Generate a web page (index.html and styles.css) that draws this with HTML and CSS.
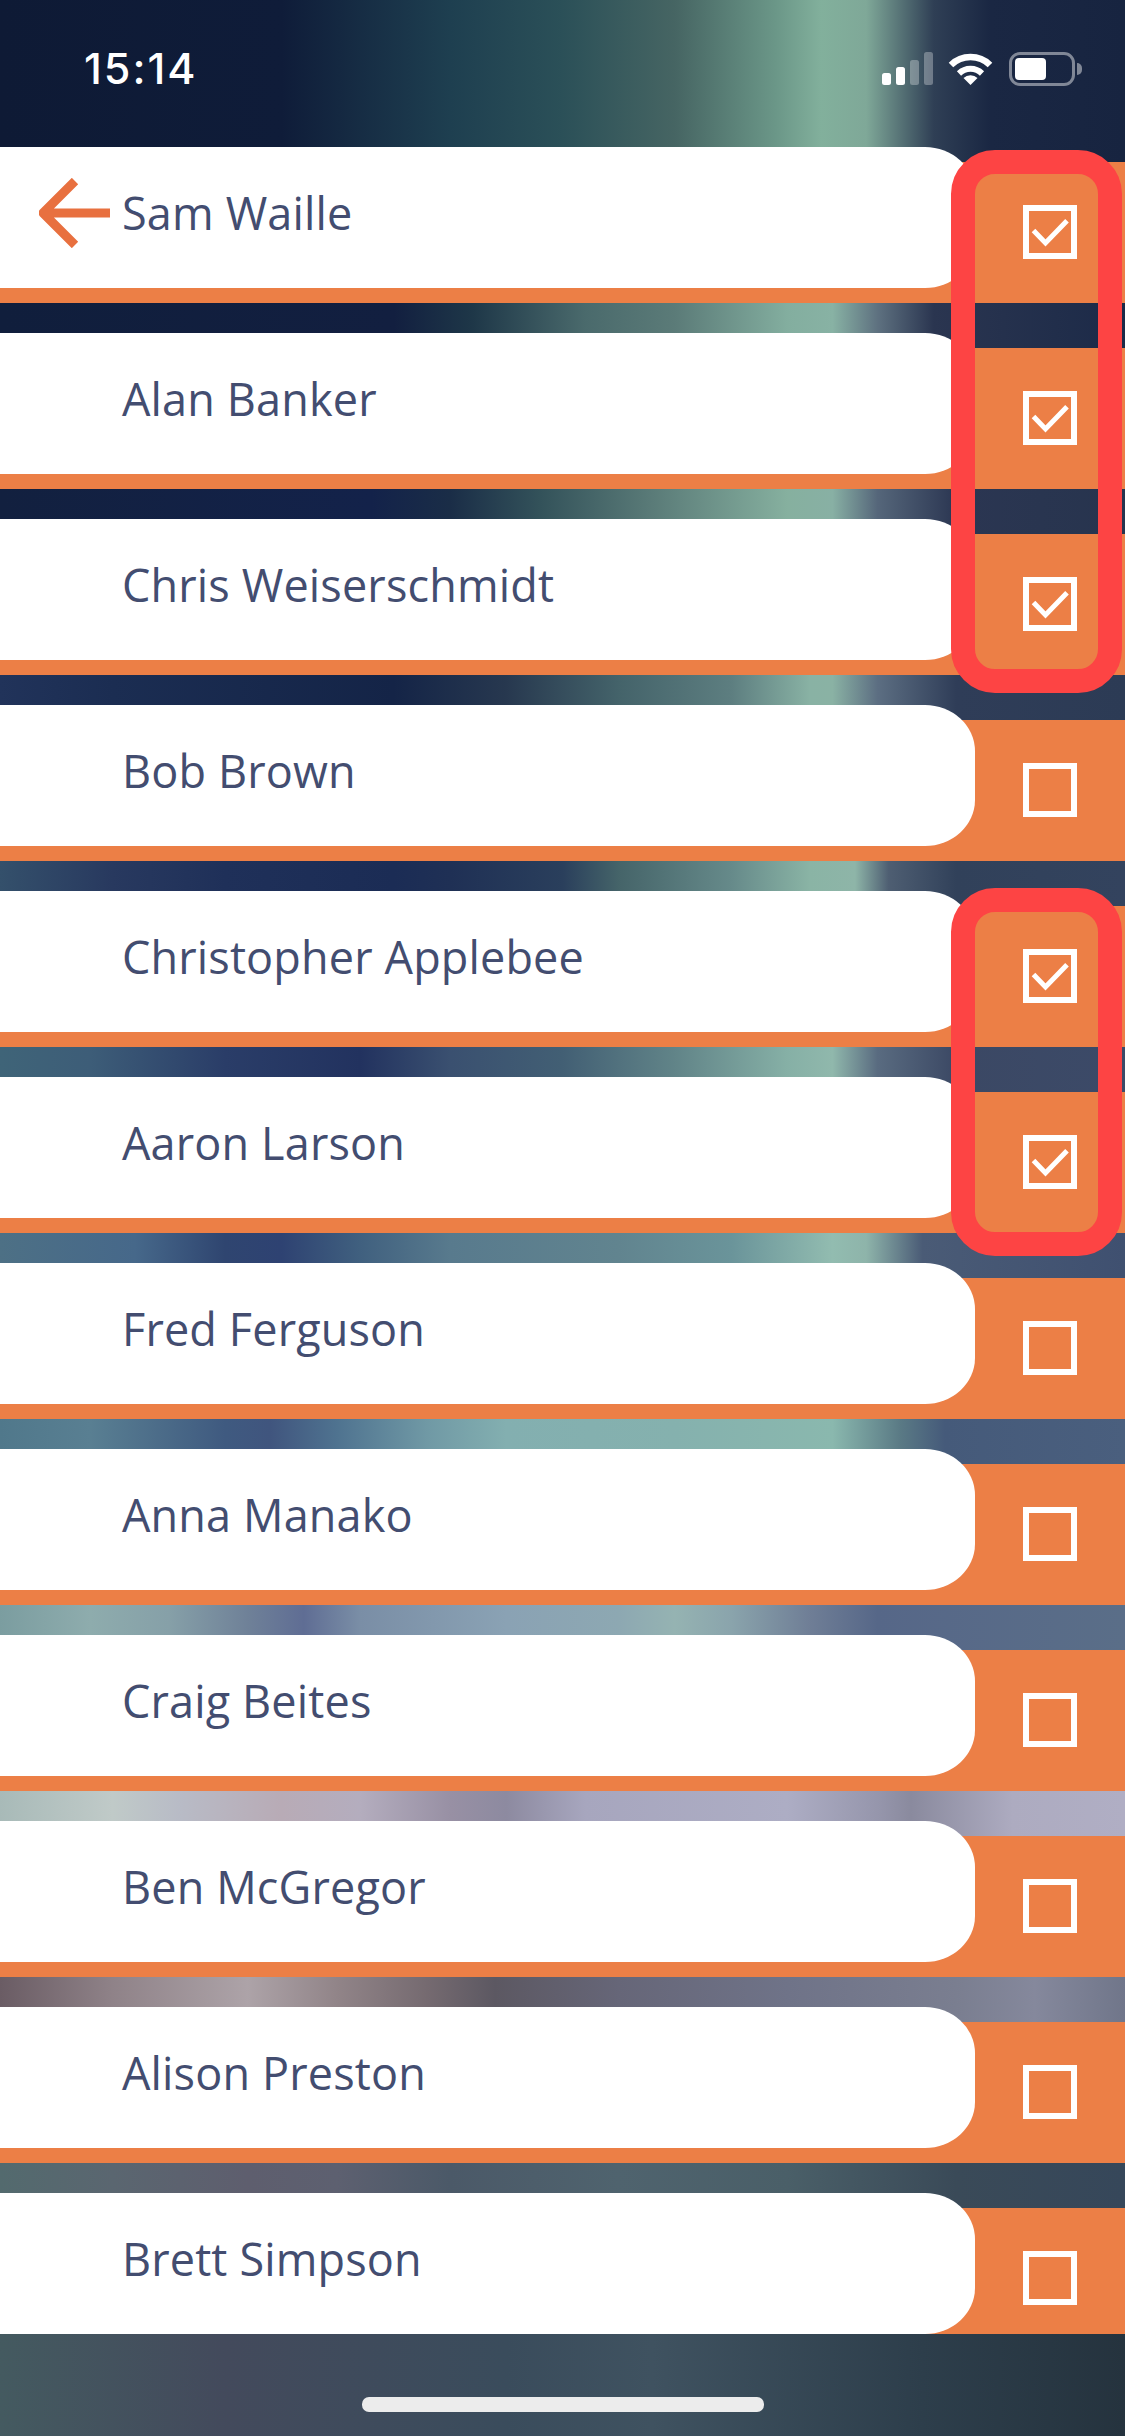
FILE: index.html
```html
<!DOCTYPE html>
<html lang="en">
<head>
    <meta charset="UTF-8">
    <meta name="viewport" content="width=device-width, initial-scale=1.0">
    <title>Team Members</title>
    <link rel="stylesheet" href="styles.css">
</head>
<body>
    <div class="screen">
        <div class="status-bar band-top">
            <div class="clock">15:14</div>
            <div class="status-icons">
                <div class="signal">
                    <span class="bar bar-1"></span>
                    <span class="bar bar-2"></span>
                    <span class="bar bar-3 off"></span>
                    <span class="bar bar-4 off"></span>
                </div>
                <svg class="wifi" viewBox="0 0 45 33">
                    <path d="M3 13 A 28 28 0 0 1 42 13" fill="none" stroke="#fff" stroke-width="6.5"/>
                    <path d="M11 21.5 A 16.5 16.5 0 0 1 34 21.5" fill="none" stroke="#fff" stroke-width="6"/>
                    <path d="M22.5 33 L15.5 26 A 10 10 0 0 1 29.5 26 Z" fill="#fff"/>
                </svg>
                <div class="battery">
                    <div class="battery-body"><div class="battery-fill"></div></div>
                    <div class="battery-nub"></div>
                </div>
            </div>
        </div>

        <div class="row band-top">
            <div class="row-inner">
                <div class="card">
                    <svg class="back-arrow" viewBox="0 0 76 70">
                        <path d="M36 3 L4 35 L36 67 M4 35 L71 35" fill="none" stroke="#e8703f" stroke-width="9" stroke-linejoin="round"/>
                    </svg>
                    <span class="name">Sam Waille</span>
                </div>
                <div class="check-cell"><div class="box"><svg viewBox="0 0 42 42"><path d="M4.5 19.5 L16.5 32 L38 9.7"/></svg></div></div>
            </div>
        </div>

        <div class="row band-2">
            <div class="row-inner">
                <div class="card"><span class="name">Alan Banker</span></div>
                <div class="check-cell"><div class="box"><svg viewBox="0 0 42 42"><path d="M4.5 19.5 L16.5 32 L38 9.7"/></svg></div></div>
            </div>
        </div>

        <div class="row band-3">
            <div class="row-inner">
                <div class="card"><span class="name">Chris Weiserschmidt</span></div>
                <div class="check-cell"><div class="box"><svg viewBox="0 0 42 42"><path d="M4.5 19.5 L16.5 32 L38 9.7"/></svg></div></div>
            </div>
        </div>

        <div class="row band-4">
            <div class="row-inner">
                <div class="card"><span class="name">Bob Brown</span></div>
                <div class="check-cell"><div class="box"></div></div>
            </div>
        </div>

        <div class="row band-5">
            <div class="row-inner">
                <div class="card"><span class="name">Christopher Applebee</span></div>
                <div class="check-cell"><div class="box"><svg viewBox="0 0 42 42"><path d="M4.5 19.5 L16.5 32 L38 9.7"/></svg></div></div>
            </div>
        </div>

        <div class="row band-6">
            <div class="row-inner">
                <div class="card"><span class="name">Aaron Larson</span></div>
                <div class="check-cell"><div class="box"><svg viewBox="0 0 42 42"><path d="M4.5 19.5 L16.5 32 L38 9.7"/></svg></div></div>
            </div>
        </div>

        <div class="row band-7">
            <div class="row-inner">
                <div class="card"><span class="name">Fred Ferguson</span></div>
                <div class="check-cell"><div class="box"></div></div>
            </div>
        </div>

        <div class="row band-8">
            <div class="row-inner">
                <div class="card"><span class="name">Anna Manako</span></div>
                <div class="check-cell"><div class="box"></div></div>
            </div>
        </div>

        <div class="row band-9">
            <div class="row-inner">
                <div class="card"><span class="name">Craig Beites</span></div>
                <div class="check-cell"><div class="box"></div></div>
            </div>
        </div>

        <div class="row band-10">
            <div class="row-inner">
                <div class="card"><span class="name">Ben McGregor</span></div>
                <div class="check-cell"><div class="box"></div></div>
            </div>
        </div>

        <div class="row band-11">
            <div class="row-inner">
                <div class="card"><span class="name">Alison Preston</span></div>
                <div class="check-cell"><div class="box"></div></div>
            </div>
        </div>

        <div class="row row-last band-12">
            <div class="row-inner">
                <div class="card"><span class="name">Brett Simpson</span></div>
                <div class="check-cell"><div class="box"></div></div>
            </div>
        </div>

        <div class="footer">
            <div class="home-indicator"></div>
        </div>

        <!-- Red annotation outlines drawn over the check column -->
        <div class="highlight highlight-a"></div>
        <div class="highlight highlight-b"></div>
    </div>
</body>
</html>
```

FILE: styles.css
```css
* {
    margin: 0;
    padding: 0;
    box-sizing: border-box;
}

body {
    font-family: "Open Sans", "Noto Sans", sans-serif;
    background: #0e1a35;
    overflow: hidden;
}

.screen {
    position: relative;
    width: 1125px;
    height: 2436px;
    overflow: hidden;
}

/* Status bar */
.status-bar {
    height: 117px;
    padding: 52px 43px 0 84px;
    display: flex;
    justify-content: space-between;
    align-items: flex-start;
}

.clock {
    font-family: "Inter", "Liberation Sans", sans-serif;
    font-size: 43px;
    font-weight: 500;
    line-height: 33px;
    letter-spacing: 2px;
    color: #fff;
}

.status-icons {
    display: flex;
    align-items: flex-start;
    gap: 15px;
}

.signal {
    display: flex;
    align-items: flex-end;
    gap: 5px;
    height: 33px;
}

.bar {
    width: 9px;
    background: #fff;
    border-radius: 2.5px;
}

.bar.off {
    background: rgba(255, 255, 255, 0.3);
}

.bar-1 { height: 12px; }
.bar-2 { height: 18px; }
.bar-3 { height: 25px; }
.bar-4 { height: 33px; }

.wifi {
    display: block;
    width: 45px;
    height: 33px;
}

.battery {
    display: flex;
    align-items: center;
    gap: 2px;
    margin-left: 1px;
}

.battery-body {
    width: 66px;
    height: 34px;
    padding: 3px;
    border: 3px solid rgba(255, 255, 255, 0.45);
    border-radius: 11px;
}

.battery-fill {
    width: 31px;
    height: 22px;
    background: #fff;
    border-radius: 4px;
}

.battery-nub {
    width: 5px;
    height: 12px;
    background: rgba(255, 255, 255, 0.45);
    border-radius: 0 5px 5px 0;
}

/* List rows */
.row {
    padding-top: 45px;
}

.row-inner {
    display: flex;
    align-items: flex-start;
    height: 141px;
    background: #ec7f46;
}

/* last row runs into the footer, no orange strip under the card */
.row-last .row-inner {
    height: 126px;
}

.card {
    position: relative;
    display: flex;
    align-items: center;
    width: 975px;
    height: 141px;
    margin-top: -15px;
    padding: 0 0 10px 122px;
    background: #fff;
    border-radius: 0 50px 50px 0 / 0 46px 46px 0;
}

.name {
    font-size: 45px;
    line-height: 60px;
    letter-spacing: 0.15px;
    color: #434d70;
}

.back-arrow {
    position: absolute;
    left: 39px;
    top: 31px;
    width: 76px;
    height: 70px;
}

.check-cell {
    padding: 43px 0 0 48px;
}

.box {
    width: 54px;
    height: 54px;
    border: 6px solid #fff;
}

.box svg {
    display: block;
    width: 42px;
    height: 42px;
}

.box path {
    fill: none;
    stroke: #fff;
    stroke-width: 5;
}

/* Blurred backdrop, sampled one band per gap */
.band-top {
    background: linear-gradient(90deg, #0e1a35 0%, #0f1c39 25%, #1e3f50 40%, #2b5058 50%, #466563 60%, #6b9788 69%, #82b09c 73%, #7fa898 77%, #2f3f55 83%, #1a2743 88%, #172440 100%);
}

.band-2 {
    background: linear-gradient(90deg, #101e3c 0%, #121f40 35%, #1e3748 42%, #4a6a6c 52%, #5b7b78 60%, #83ae9f 70%, #88b2a4 74%, #5e7180 78%, #2a3550 83%, #1c2a48 100%);
}

.band-3 {
    background: linear-gradient(90deg, #12203f 0%, #13224a 33%, #1a2d47 40%, #33525a 48%, #5a7b78 58%, #86b09f 70%, #88b0a4 74%, #55667a 78%, #2b3652 85%, #27344e 100%);
}

.band-4 {
    background: linear-gradient(90deg, #21335a 0%, #1b2d52 10%, #142447 35%, #27384f 45%, #44636a 55%, #5d7e80 65%, #89b2a4 72%, #8ab2a4 74%, #5c6e82 78%, #2f3d58 85%, #2c3b55 100%);
}

.band-5 {
    background: linear-gradient(90deg, #34506b 0%, #28395f 10%, #1f3059 20%, #1b2c55 35%, #1f3055 40%, #2a3f5c 50%, #456469 55%, #668a8a 65%, #8ab4a5 72%, #8eb5a8 76%, #4e5e72 79%, #31415a 85%, #33435e 100%);
}

.band-6 {
    background: linear-gradient(90deg, #3f6478 0%, #3d5d78 8%, #2a3d68 20%, #22325f 32%, #3a5070 40%, #425f74 50%, #618488 60%, #86b0a6 70%, #90b8ac 74%, #596b80 78%, #3b4864 85%, #3c4a68 100%);
}

.band-7 {
    background: linear-gradient(90deg, #4d7085 0%, #46688a 12%, #2f4570 20%, #2e4272 25%, #40607f 32%, #587a8d 40%, #61848f 55%, #6a949a 65%, #92bcb0 74%, #8eb4aa 77%, #4a5b76 82%, #3f5070 100%);
}

.band-8 {
    background: linear-gradient(90deg, #50788b 0%, #597f92 8%, #3f5a80 20%, #40557e 24%, #4f7390 30%, #7099a5 38%, #83afb0 45%, #85b1ae 60%, #8ab8ae 74%, #5a7a85 80%, #455a7a 84%, #4a5f7e 100%);
}

.band-9 {
    background: linear-gradient(90deg, #7b9da0 0%, #8eacad 8%, #86a0a8 15%, #6f8198 22%, #5f6d94 27%, #7a8ea6 32%, #8aa2b4 45%, #8da8b2 55%, #95b3b2 60%, #8aa4ac 65%, #6f7e96 72%, #566788 78%, #5a6e88 100%);
}

.band-10 {
    background: linear-gradient(90deg, #a8bab8 0%, #c0cac8 10%, #b8bbc6 16%, #b8abb6 25%, #b4adbe 32%, #9890a4 40%, #8d8aa0 45%, #a7a6be 52%, #adadc4 70%, #9696ac 78%, #8a8a9e 81%, #adabc0 90%, #b0aec4 100%);
}

.band-11 {
    background: linear-gradient(90deg, #6a5c64 0%, #8f8288 10%, #ada3a8 22%, #918488 30%, #756a70 38%, #5c5862 44%, #666678 55%, #6f7388 70%, #7a7e90 85%, #85889c 92%, #70768a 100%);
}

.band-12 {
    background: linear-gradient(90deg, #536a6e 0%, #5a6670 10%, #5e5e6e 22%, #5d6070 30%, #4b5968 40%, #4f636e 55%, #4a5f68 70%, #3a4a58 85%, #36475a 100%);
}

.footer {
    display: flex;
    justify-content: center;
    height: 102px;
    padding-top: 63px;
    background: linear-gradient(90deg, #445a60 0%, #434a5c 20%, #3a4c5c 45%, #3f5260 58%, #2d3e4b 82%, #25333e 100%);
}

.home-indicator {
    width: 402px;
    height: 15px;
    background: #ececec;
    border-radius: 7px;
}

/* Annotations */
.highlight {
    position: absolute;
    left: 951px;
    width: 171px;
    border: 24px solid #fd4444;
    border-radius: 44px;
}

.highlight-a {
    top: 150px;
    height: 543px;
}

.highlight-b {
    top: 888px;
    height: 368px;
}
```
